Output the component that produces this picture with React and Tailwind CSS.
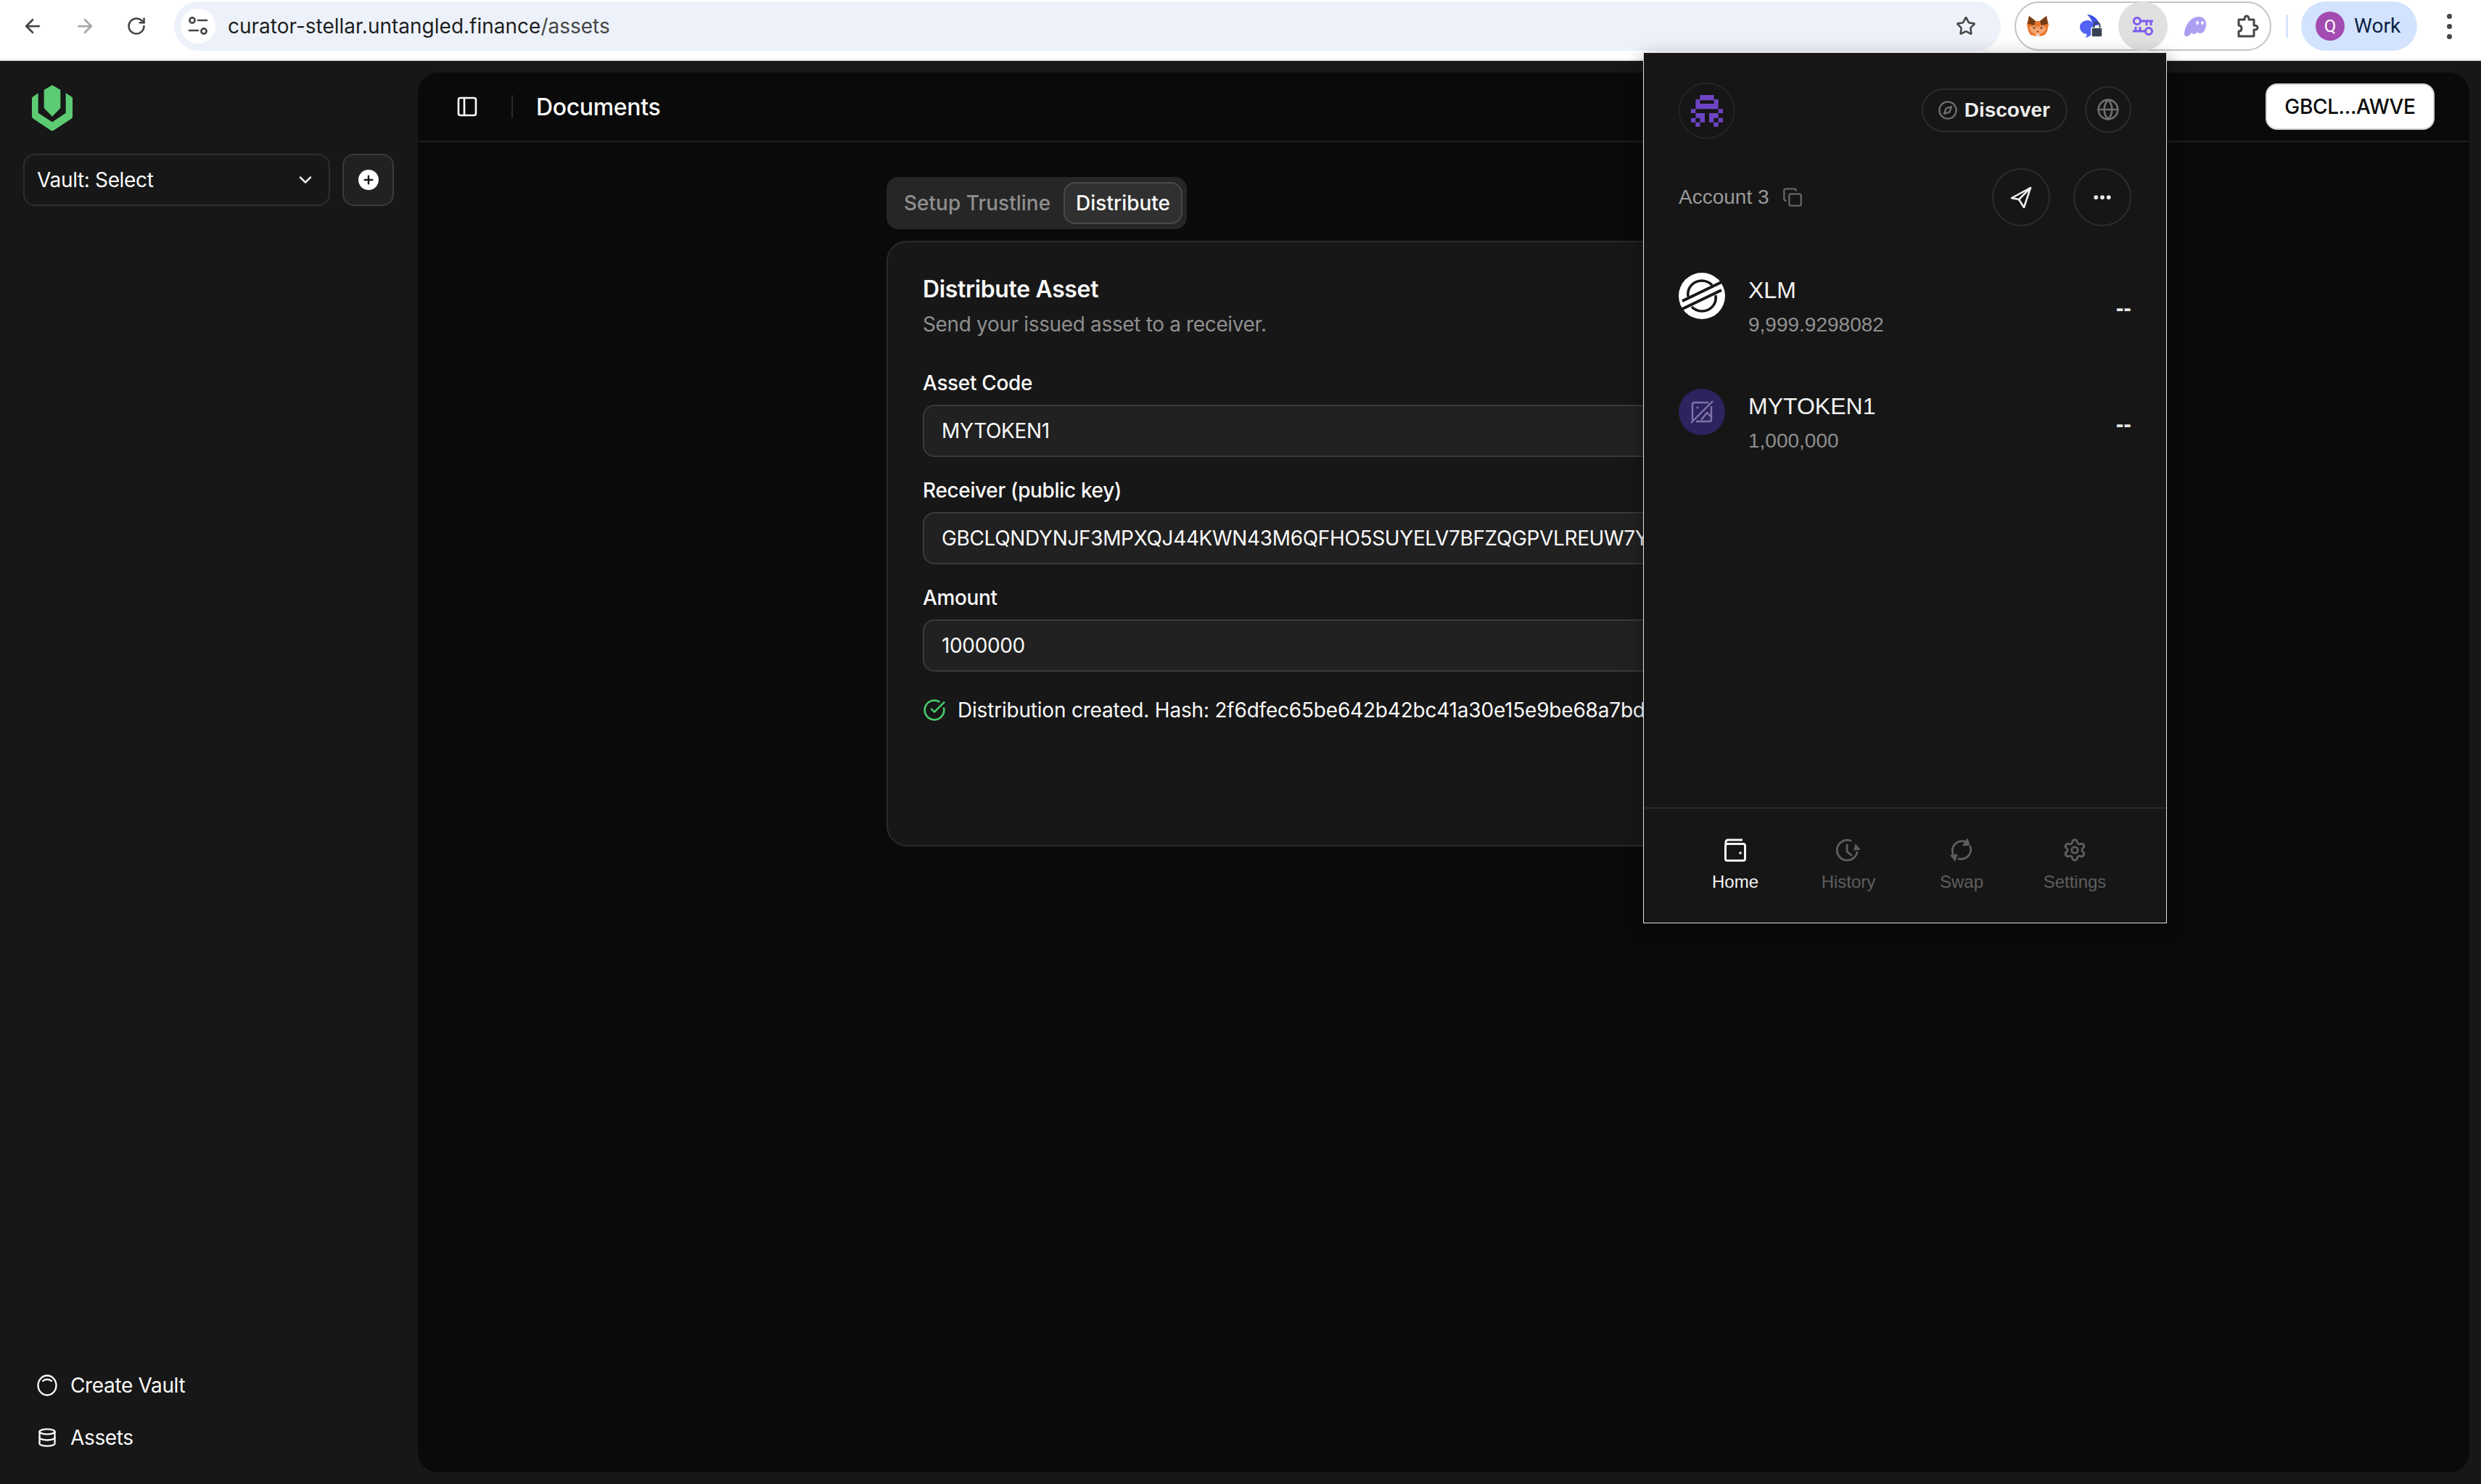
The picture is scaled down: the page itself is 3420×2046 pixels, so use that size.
// App.jsx
import React from "react";
import {
  ArrowLeft,
  ArrowRight,
  RotateCw,
  Star,
  PanelLeft,
  ChevronDown,
  Plus,
  Database,
  Copy,
  Globe,
  Compass,
  MoreHorizontal,
  CircleCheckBig,
  Settings,
} from "lucide-react";

// Browser toolbar icons
const TuneIcon = () => (
  <svg width="28" height="26" viewBox="0 0 28 26" fill="none" stroke="#444746" strokeWidth="2.6" strokeLinecap="round">
    <circle cx="6" cy="5" r="3.6" />
    <path d="M14 5h12" />
    <path d="M2 19h12" />
    <circle cx="22" cy="20" r="3.6" />
  </svg>
);

const FoxIcon = () => (
  <svg width="32" height="30" viewBox="0 0 32 30">
    <path d="M1 13L4 1l9 7h6l9-7 3 12-2 9-3 5-7 2h-6l-7-2-3-5z" fill="#e8762d" />
    <path d="M4 1l9 7-2 6-9-2zM28 1l-9 7 2 6 9-2z" fill="#763d16" />
    <path d="M11 14l5 3 5-3 7 3-3 6-5 3h-8l-5-3-3-6z" fill="#f6a26b" />
    <path d="M9 16l4 1-2 2zM23 16l-4 1 2 2z" fill="#3a2a20" />
    <path d="M13 26h6l-1 3h-4z" fill="#e4dcd4" />
    <path d="M14.5 22h3l-1.500 1.800z" fill="#3a2a20" />
  </svg>
);

const RabbitIcon = () => (
  <svg width="34" height="34" viewBox="0 0 34 34">
    <path d="M11 1c7 0 15 5 17 14l-8 2C19 11 16 6 11 1z" fill="#3f4fe0" />
    <path d="M1 18c0-5 5-9 11-9 6 0 9 5 9 11 0 6-5 10-9 12l-3 1 2-5c-5 0-10-4-10-10z" fill="#5363f8" />
    <rect x="17" y="19" width="15" height="13" rx="2" fill="#374151" stroke="#ffffff" strokeWidth="1.5" />
    <path d="M20.500 19v-3a4 4 0 018 0v3" fill="none" stroke="#374151" strokeWidth="2" />
  </svg>
);

const KeysIcon = () => (
  <svg width="30" height="28" viewBox="0 0 30 28" fill="none" stroke="#7d5cf0" strokeWidth="3">
    <circle cx="7" cy="7" r="4.600" />
    <path d="M12 7h17M20 7v6M26 7v6" />
    <circle cx="23" cy="21" r="4.600" />
    <path d="M18 21H1M5 21v-6M11 21v-6" />
  </svg>
);

const GhostIcon = () => (
  <svg width="32" height="28" viewBox="0 0 32 28">
    <path d="M1 25C2 12 10 1 21 1c7 0 10 5 10 11 0 7-4 12-8 12-2 0-3-1-4-2-1 2-3 3-5 3-1 0-2-1-3-2-2 3-4 5-7 5-2 0-3-1-3-3z" fill="#ab9ff2" />
    <ellipse cx="19" cy="9.500" rx="1.800" ry="2.600" fill="#ffffff" />
    <ellipse cx="26" cy="9.500" rx="1.800" ry="2.600" fill="#ffffff" />
  </svg>
);

const PuzzleIcon = () => (
  <svg width="32" height="32" viewBox="0 0 32 32" fill="none" stroke="#444746" strokeWidth="3" strokeLinejoin="round">
    <path d="M4 7h8c0-3 1-5 3-5s3 2 3 5h7v8c3 0 5 1 5 3s-2 3-5 3v8a1 1 0 01-1 1H4v-7c3 0 4-1 4-3.500S7 15 4 15z" />
  </svg>
);

// App logo and wallet artwork
const VaultLogo = () => (
  <svg className="ml-3 mt-[33px] block" width="56" height="64" viewBox="42 35 168 190" fill="#5ccb74">
    <path d="M126 35l34 20v75l-34 35-34-35V55z" />
    <path d="M48 82l20-14v82l58 38 56-38V68l22 14c4 2 6 5 6 9v74c0 4-2 7-5 9l-73 48c-4 2-8 2-12 0l-72-48c-3-2-6-5-6-9V91c0-4 2-7 6-9z" />
  </svg>
);

const CreateVaultIcon = () => (
  <svg width="28" height="32" viewBox="0 0 28 32" fill="none" stroke="#fafafa" strokeWidth="2.300" strokeLinecap="round">
    <ellipse cx="14" cy="16" rx="12.500" ry="13.500" />
    <path d="M8 10c3-3 9-3 12 0" />
  </svg>
);

const GhostLogo = () => (
  <svg width="100" height="100" viewBox="0 0 300 300">
    <circle cx="158" cy="155" r="114" fill="none" stroke="#262626" strokeWidth="5" />
    <path
      fill="#6d45c4"
      fillRule="evenodd"
      d="M130 90h58v18h18v40H112v-40h18zM130 112v14h58v-14zM93 148h19v17H93zM206 148h19v17h-19zM112 165h38v38h-20v-18h-18zM168 165h38v20h-19v18h-19zM93 185h19v18H93zM206 185h19v18h-19zM112 203h18v18h-18zM187 203h19v18h-19z"
    />
  </svg>
);

const StellarLogo = () => (
  <svg width="64" height="64" viewBox="0 0 64 64">
    <circle cx="32" cy="32" r="32" fill="#ffffff" />
    <path d="M13 33C11 20 21 11 32 11c6 0 10 2 14 6" fill="none" stroke="#161616" strokeWidth="3.600" />
    <path d="M51 31c2 13-8 22-19 22-6 0-10-2-14-6" fill="none" stroke="#161616" strokeWidth="3.600" />
    <path d="M5 39L59 13M5 50L59 24" fill="none" stroke="#161616" strokeWidth="4" />
  </svg>
);

const TokenPlaceholder = () => (
  <div className="flex h-16 w-16 items-center justify-center rounded-full bg-[#2e225f]">
    <svg width="34" height="34" viewBox="0 0 34 34" fill="none" stroke="#7f75a6" strokeWidth="2.400">
      <path d="M26 4H6a2 2 0 00-2 2v22" />
      <path d="M30 9v19a2 2 0 01-2 2H9" />
      <path d="M2 32L32 2" />
      <path d="M16 28l8-10 6 6" />
      <circle cx="11" cy="11" r="1.500" fill="#7f75a6" stroke="none" />
    </svg>
  </div>
);

const SendIcon = () => (
  <svg width="30" height="30" viewBox="0 0 30 30" fill="none" stroke="#f2f2f2" strokeWidth="2.500" strokeLinejoin="round" strokeLinecap="round">
    <path d="M28 2L2 16l10 2 7 11z" />
    <path d="M28 2L12 18" />
  </svg>
);

const WalletIcon = () => (
  <svg width="32" height="32" viewBox="0 0 32 32" fill="none" stroke="#f5f5f5" strokeWidth="3">
    <rect x="2.500" y="7.500" width="27" height="23" rx="2.500" />
    <path d="M3 8V5a3 3 0 013-3h20" />
    <circle cx="23" cy="20" r="1.800" fill="#f5f5f5" stroke="none" />
  </svg>
);

const HistoryIcon = () => (
  <svg width="34" height="32" viewBox="0 0 34 32" fill="none" stroke="#5e5e5e" strokeWidth="2.800" strokeLinecap="round">
    <path d="M29 19a14 14 0 11-9-16" />
    <path d="M15 9v9l6 5" />
    <path d="M27 8l6 7-8 1z" fill="#5e5e5e" strokeWidth="1" />
  </svg>
);

const SwapIcon = () => (
  <svg width="32" height="32" viewBox="0 0 32 32" fill="none" stroke="#5e5e5e" strokeWidth="2.800" strokeLinecap="round">
    <path d="M4 21C1 11 9 2 20 4" />
    <path d="M28 11c3 10-5 19-16 17" />
    <path d="M24 0l3 9-9 1z" fill="#5e5e5e" strokeWidth="1" />
    <path d="M1 23l9-1-3 9z" fill="#5e5e5e" strokeWidth="1" />
  </svg>
);

const Field = ({ label, value }) => (
  <div>
    <div className="h-10 text-[28px] leading-10 font-medium text-[#fafafa]">{label}</div>
    <div className="mt-[10px] flex h-[72px] items-center overflow-hidden rounded-2xl border-2 border-[#3a3a3a] bg-[#212121] px-6 text-[28px] whitespace-nowrap text-[#fafafa]">
      {value}
    </div>
  </div>
);

const AssetRow = ({ icon, name, amount }) => (
  <div className="flex items-center justify-between">
    <div className="flex items-start gap-8">
      {icon}
      <div>
        <div className="text-[32px] leading-12 text-[#f2f2f2]">{name}</div>
        <div className="text-[28px] leading-12 text-[#8f8f8f]">{amount}</div>
      </div>
    </div>
    <div className="text-[32px] font-bold text-[#e5e5e5]">--</div>
  </div>
);

const NavItem = ({ icon, label, active }) => (
  <div className="flex flex-col items-center">
    <div className="flex h-8 items-center">{icon}</div>
    <div className={`mt-3 text-[24px] leading-8 ${active ? "text-[#f5f5f5]" : "text-[#5e5e5e]"}`}>{label}</div>
  </div>
);

const WalletPopup = () => (
  <div className="absolute top-[72px] left-[2265px] z-10 flex h-[1201px] w-[722px] flex-col border border-[#e0e0e0] bg-[#161616] font-['Liberation_Sans',sans-serif] tracking-normal shadow-[0_8px_24px_rgba(0,0,0,0.4)]">
    <div className="px-[48px] pt-[39px]">
      <div className="flex items-center justify-between">
        <div className="-my-[11px] -ml-[14px]">
          <GhostLogo />
        </div>
        <div className="flex items-center gap-6">
          <div className="mt-[2px] flex h-[60px] items-center gap-[9px] rounded-full border-2 border-[#2c2c2c] pr-[22px] pl-[20px] text-[28px] font-bold text-[#ededed]">
            <Compass size={28} color="#6e6e6e" strokeWidth={2} />
            Discover
          </div>
          <div className="flex h-16 w-16 items-center justify-center rounded-full border-2 border-[#2c2c2c]">
            <Globe size={32} color="#6e6e6e" strokeWidth={2} />
          </div>
        </div>
      </div>

      <div className="mt-[42px] flex items-center justify-between">
        <div className="flex items-center gap-[18px] text-[28px] text-[#9a9a9a]">
          Account 3
          <Copy size={28} color="#666666" strokeWidth={2} />
        </div>
        <div className="flex gap-8">
          <div className="flex h-20 w-20 items-center justify-center rounded-full border-2 border-[#2c2c2c]">
            <SendIcon />
          </div>
          <div className="flex h-20 w-20 items-center justify-center rounded-full border-2 border-[#2c2c2c]">
            <MoreHorizontal size={30} color="#f2f2f2" strokeWidth={2.6} />
          </div>
        </div>
      </div>

      {/* Assets */}
      <div className="mt-16 space-y-16">
        <AssetRow icon={<StellarLogo />} name="XLM" amount="9,999.9298082" />
        <AssetRow icon={<TokenPlaceholder />} name="MYTOKEN1" amount="1,000,000" />
      </div>
    </div>

    {/* Bottom nav */}
    <div className="mt-auto grid h-[159px] grid-cols-4 border-t-2 border-[#2a2a2a] px-[48px] pt-[41px]">
      <NavItem icon={<WalletIcon />} label="Home" active />
      <NavItem icon={<HistoryIcon />} label="History" />
      <NavItem icon={<SwapIcon />} label="Swap" />
      <NavItem icon={<Settings size={34} color="#5e5e5e" strokeWidth={2} />} label="Settings" />
    </div>
  </div>
);

const BrowserBar = () => (
  <div className="flex h-[84px] border-b-2 border-[#e4e4e4] bg-white pt-[2px] pl-[30px] tracking-normal">
    <div className="flex h-[68px] items-center gap-[42px]">
      <ArrowLeft size={30} color="#444746" strokeWidth={2.2} />
      <ArrowRight size={30} color="#a8a8a8" strokeWidth={2.2} />
      <RotateCw size={28} color="#444746" strokeWidth={2.2} />
    </div>
    <div className="ml-[38px] flex h-[68px] w-[2518px] items-center rounded-full bg-[#edf2fa] pr-[34px] pl-[9px]">
      <div className="flex h-12 w-12 items-center justify-center rounded-full bg-white">
        <TuneIcon />
      </div>
      <div className="ml-[17px] text-[28px] text-[#1f1f1f]">
        curator-stellar.untangled.finance<span className="text-[#444746]">/assets</span>
      </div>
      <Star size={28} color="#444746" strokeWidth={2.2} className="ml-auto" />
    </div>
    <div className="ml-[19px] flex h-[68px] w-[354px] items-center rounded-full border-2 border-[#c4c4c4]">
      <div className="ml-[14px]">
        <FoxIcon />
      </div>
      <div className="ml-[41px]">
        <RabbitIcon />
      </div>
      <div className="ml-[20px] flex h-[68px] w-[68px] items-center justify-center rounded-full bg-[#e0e0e0]">
        <KeysIcon />
      </div>
      <div className="ml-[22px]">
        <GhostIcon />
      </div>
      <div className="ml-[40px]">
        <PuzzleIcon />
      </div>
    </div>
    <div className="mt-[18px] mr-[18px] ml-[20px] h-[32px] w-[3px] rounded-full bg-[#d3e3fd]" />
    <div className="flex h-[68px] w-[160px] items-center rounded-full bg-[#d3e3fd] pl-[20px] font-['Roboto',sans-serif]">
      <div className="flex h-10 w-10 items-center justify-center rounded-full bg-[#a24bb1] text-[24px] text-white">Q</div>
      <span className="ml-[13px] text-[28px] text-[#0a1f44]">Work</span>
    </div>
    <div className="ml-[26px] flex h-[68px] w-[36px] flex-col items-center justify-center gap-[7px]">
      <span className="h-[7px] w-[7px] rounded-full bg-[#444746]" />
      <span className="h-[7px] w-[7px] rounded-full bg-[#444746]" />
      <span className="h-[7px] w-[7px] rounded-full bg-[#444746]" />
    </div>
  </div>
);

const Sidebar = () => (
  <aside className="flex w-[576px] shrink-0 flex-col px-8 pb-[28px]">
    <VaultLogo />
    <div className="mt-[31px] flex gap-[17px]">
      <div className="flex h-[72px] w-[423px] items-center justify-between rounded-2xl border-2 border-[#2e2e2e] pr-[18px] pl-[17px] text-[28px] text-[#fafafa]">
        Vault: Select
        <ChevronDown size={28} color="#e5e5e5" strokeWidth={2.2} />
      </div>
      <div className="flex h-[72px] w-[71px] items-center justify-center rounded-2xl border-2 border-[#3a3a3a] bg-[#212121]">
        <div className="flex h-7 w-7 items-center justify-center rounded-full bg-white">
          <Plus size={18} color="#171717" strokeWidth={3.2} />
        </div>
      </div>
    </div>
    <div className="mt-auto">
      <div className="flex h-[72px] items-center gap-[18px] pl-[19px] text-[28px] text-[#fafafa]">
        <CreateVaultIcon />
        Create Vault
      </div>
      <div className="flex h-[72px] items-center gap-[18px] pl-[19px] text-[28px] text-[#fafafa]">
        <Database size={28} color="#fafafa" strokeWidth={2} />
        Assets
      </div>
    </div>
  </aside>
);

const DistributeCard = () => (
  <div className="mt-4 h-[835px] rounded-[28px] border-2 border-[#2a2a2a] bg-[#171717] px-[48px] pt-[45px]">
    <div className="h-10 text-[32px] leading-10 font-semibold text-[#fafafa]">Distribute Asset</div>
    <div className="mt-2 h-10 text-[28px] leading-10 text-[#8f8f8f]">Send your issued asset to a receiver.</div>
    <div className="mt-[41px] space-y-[26px]">
      <Field label="Asset Code" value="MYTOKEN1" />
      <Field label="Receiver (public key)" value="GBCLQNDYNJF3MPXQJ44KWN43M6QFHO5SUYELV7BFZQGPVLREUW7YAWVE" />
      <Field label="Amount" value="1000000" />
    </div>
    <div className="mt-[33px] flex h-10 items-center gap-4 overflow-hidden text-[28px] tracking-[-0.2px] whitespace-nowrap text-[#fafafa]">
      <CircleCheckBig size={32} color="#4ac66b" strokeWidth={2} className="shrink-0" />
      Distribution created. Hash: 2f6dfec65be642b42bc41a30e15e9be68a7bd
    </div>
  </div>
);

const App = () => (
  <div className="relative h-[2046px] w-[3420px] overflow-hidden bg-[#171717] font-['Inter',sans-serif] tracking-[-0.35px]">
    <BrowserBar />
    <div className="flex h-[1962px]">
      <Sidebar />
      <main className="m-4 ml-0 flex-1 rounded-[28px] bg-[#0a0a0a]">
        <header className="flex h-[96px] items-center border-b-2 border-[#1f1f1f] pr-[48px] pl-[52px]">
          <PanelLeft size={32} color="#fafafa" strokeWidth={2} />
          <div className="mr-[32px] ml-[45px] h-8 w-[2px] bg-[#2a2a2a]" />
          <div className="pt-[2px] text-[32px] font-medium text-[#fafafa]">Documents</div>
          <div className="ml-auto flex h-16 w-[233px] items-center justify-center rounded-2xl border-2 border-[#d4d4d4] bg-white text-[28px] font-medium text-[#0a0a0a]">
            GBCL...AWVE
          </div>
        </header>
        <div className="mx-auto w-[1536px] pt-[48px]">
          <div className="flex w-fit rounded-2xl bg-[#262626] px-[6px] py-[7px] text-[28px] font-medium tracking-normal">
            <div className="flex h-[58px] items-center border-2 border-transparent px-4 text-[#8f8f8f]">Setup Trustline</div>
            <div className="flex h-[58px] items-center rounded-2xl border-2 border-[#4a4a4a] bg-[#303030] px-[15px] text-[#fafafa]">Distribute</div>
          </div>
          <DistributeCard />
        </div>
      </main>
    </div>
    <WalletPopup />
  </div>
);

export default App;
